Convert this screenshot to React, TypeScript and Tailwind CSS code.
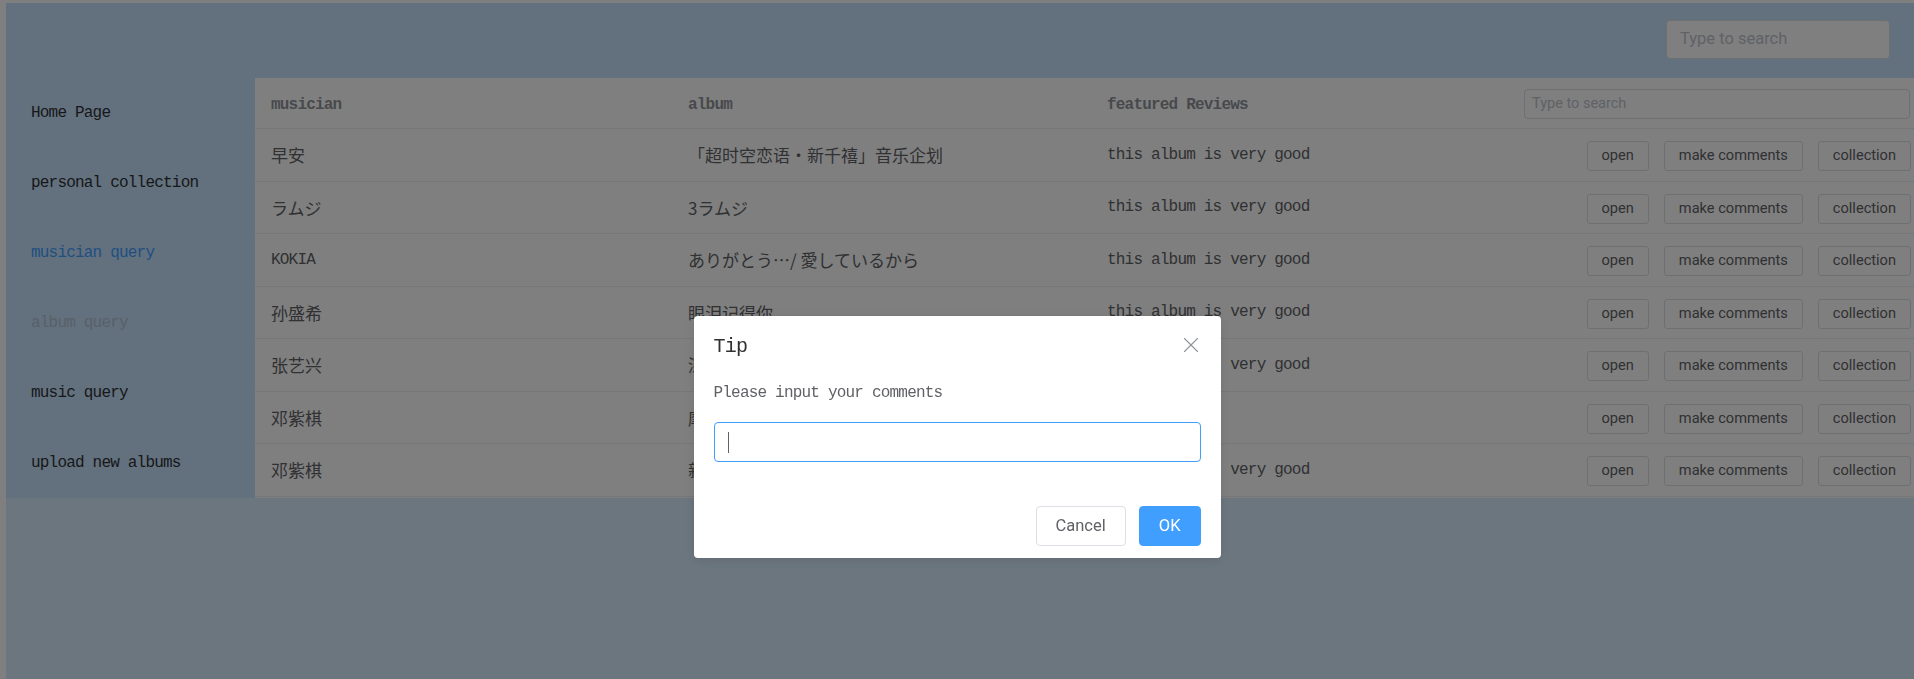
import { X } from "lucide-react";

const mono = "font-['Liberation_Mono','Noto_Sans_CJK_SC',monospace] text-[16px] tracking-[-0.8px]";
const cjk = "font-['Noto_Sans_CJK_SC','Liberation_Mono',sans-serif] text-[17px]";
const cjkJp = "font-['Noto_Sans_CJK_JP','Liberation_Mono',sans-serif] text-[17px]";
const ui = "font-['Roboto','Liberation_Sans',sans-serif]";

const menu = [
  { label: "Home Page", cls: "text-[#303133]" },
  { label: "personal collection", cls: "text-[#303133]" },
  { label: "musician query", cls: "text-[#409eff]" },
  { label: "album query", cls: "text-[#b3c0d1]" },
  { label: "music query", cls: "text-[#303133]" },
  { label: "upload new albums", cls: "text-[#303133]" },
];

type Row = { musician: string; mFont: string; album: string; aFont: string; review: string };

const rows: Row[] = [
  { musician: "早安", mFont: cjk, album: "「超时空恋语・新千禧」音乐企划", aFont: cjk, review: "this album is very good" },
  { musician: "ラムジ", mFont: cjkJp, album: "3ラムジ", aFont: cjkJp, review: "this album is very good" },
  { musician: "KOKIA", mFont: mono, album: "ありがとう…/ 愛しているから", aFont: cjkJp, review: "this album is very good" },
  { musician: "孙盛希", mFont: cjk, album: "眼泪记得你", aFont: cjk, review: "this album is very good" },
  { musician: "张艺兴", mFont: cjk, album: "深夜诗人", aFont: cjk, review: "this album is very good" },
  { musician: "邓紫棋", mFont: cjk, album: "摩天动物园", aFont: cjk, review: "" },
  { musician: "邓紫棋", mFont: cjk, album: "新的心跳", aFont: cjk, review: "this album is very good" },
];

function RowButton({ children }: { children: string }) {
  return (
    <button
      className={`${ui} h-[30px] rounded-[3px] border border-[#dcdfe6] bg-white px-[14px] text-[14.6px] text-[#606266]`}
    >
      {children}
    </button>
  );
}

export default function App() {
  return (
    <div className="flex h-screen flex-col overflow-hidden bg-white pl-[6px] pt-[3px]">
      <header className="flex h-[75px] shrink-0 items-center justify-end bg-[#c6e2ff] pr-[24px]">
        <div
          className={`${ui} mt-[-2px] flex h-[39px] w-[224px] items-center rounded-[4px] border border-[#dcdfe6] bg-white pl-[13px] text-[16.5px] text-[#c0c4cc]`}
        >
          Type to search
        </div>
      </header>

      <div className="flex-1 bg-[#d9ecff]">
        <div className="flex">
          <aside className="w-[249px] shrink-0 bg-[#c6e2ff]">
            {menu.map((m) => (
              <div key={m.label} className={`${mono} ${m.cls} flex h-[70px] items-center pl-[25px]`}>
                {m.label}
              </div>
            ))}
          </aside>

          <main className="flex-1 bg-white">
            <div className="grid h-[51px] grid-cols-[417px_419px_419px_1fr] items-center border-b border-[#ebeef5]">
              <div className={`${mono} pl-[16px] pt-[3px] font-bold text-[#909399]`}>musician</div>
              <div className={`${mono} pl-[16px] pt-[3px] font-bold text-[#909399]`}>album</div>
              <div className={`${mono} pl-[16px] pt-[3px] font-bold text-[#909399]`}>featured Reviews</div>
              <div className="pl-[14px] pr-[4px] pt-[2px]">
                <div
                  className={`${ui} flex h-[30px] items-center rounded-[4px] border border-[#dcdfe6] pl-[7px] text-[14.5px] text-[#c0c4cc]`}
                >
                  Type to search
                </div>
              </div>
            </div>
            {rows.map((r, i) => (
              <div
                key={i}
                className="grid h-[52.5px] grid-cols-[417px_419px_419px_1fr] items-center border-b border-[#ebeef5] text-[#606266]"
              >
                <div className={`${r.mFont} pl-[16px]`}>{r.musician}</div>
                <div className={`${r.aFont} pl-[16px]`}>{r.album}</div>
                <div className={`${mono} pl-[16px]`}>{r.review}</div>
                <div className="flex justify-end gap-[15px] pr-[3px] pt-[3px]">
                  <RowButton>open</RowButton>
                  <RowButton>make comments</RowButton>
                  <RowButton>collection</RowButton>
                </div>
              </div>
            ))}
          </main>
        </div>
      </div>

      <div className="fixed inset-0 z-10 bg-black/50" />

      <div className="fixed inset-0 z-20 flex justify-center pt-[316px]">
        <div className="h-[242px] w-[527px] rounded-[4px] bg-white px-5 shadow-[0_2px_12px_rgba(0,0,0,0.1)]">
          <div className="flex items-center justify-between pt-[18px]">
            <span className="font-['Liberation_Mono',monospace] text-[20px] leading-[26px] tracking-[-0.8px] text-[#303133]">
              Tip
            </span>
            <X className="mr-[-3px] mt-[-4px] h-[26px] w-[26px] text-[#909399]" strokeWidth={1} />
          </div>
          <div className={`${mono} mt-[21px] leading-[24px] text-[#606266]`}>Please input your comments</div>
          <div className="mt-[17px] flex h-[40px] items-center rounded-[4px] border border-[#409eff] pl-[13px]">
            <span className="h-[21px] w-px bg-[#606266]" />
          </div>
          <div className="mt-[44px] flex justify-end gap-[13px]">
            <button
              className={`${ui} h-[40px] rounded-[4px] border border-[#dcdfe6] bg-white px-[19px] text-[16.5px] text-[#606266]`}
            >
              Cancel
            </button>
            <button
              className={`${ui} h-[40px] rounded-[4px] border border-[#409eff] bg-[#409eff] px-[19px] text-[16.5px] text-white`}
            >
              OK
            </button>
          </div>
        </div>
      </div>
    </div>
  );
}
